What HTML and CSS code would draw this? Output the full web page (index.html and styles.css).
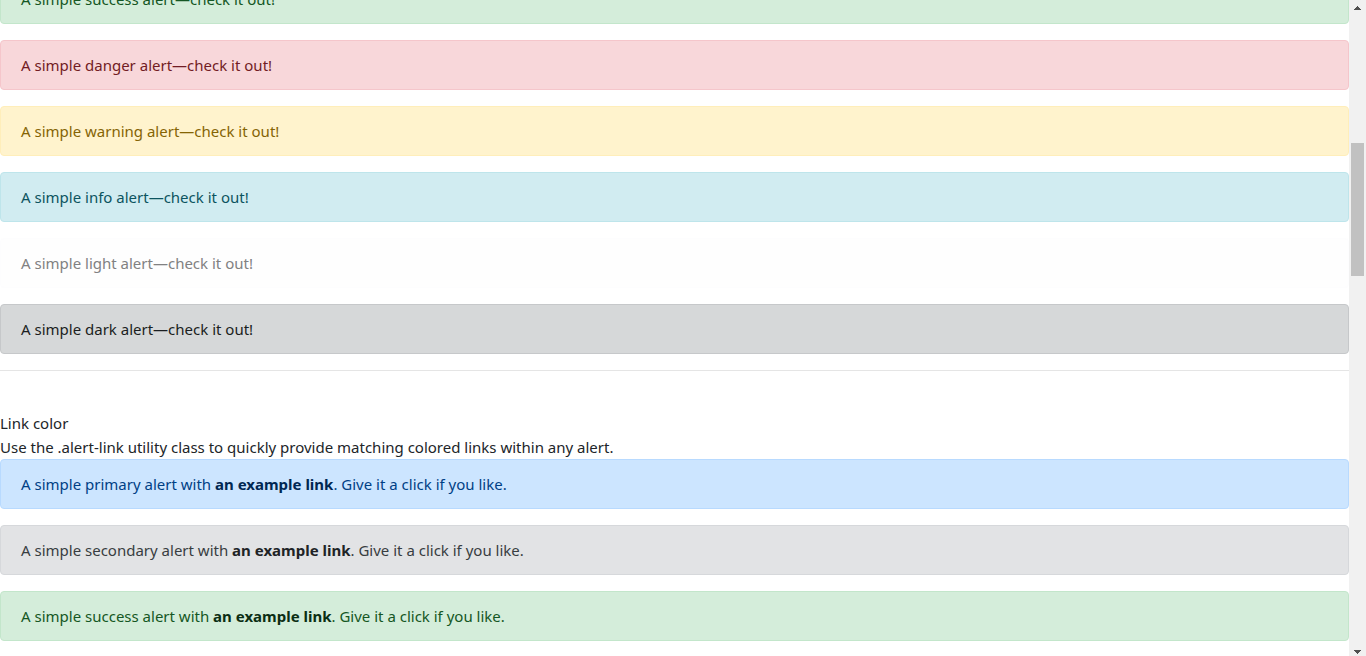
FILE: index.html
```html
<!DOCTYPE html>
<html lang="en">
<head>
<meta charset="utf-8">
<meta name="viewport" content="width=device-width, initial-scale=1">
<title>Alerts</title>
<link rel="stylesheet" href="styles.css">
</head>
<body>
<div class="window">
  <main class="page">
    <div class="page-content">
      <div class="alert alert-success" role="alert">A simple success alert—check it out!</div>
      <div class="alert alert-danger" role="alert">A simple danger alert—check it out!</div>
      <div class="alert alert-warning" role="alert">A simple warning alert—check it out!</div>
      <div class="alert alert-info" role="alert">A simple info alert—check it out!</div>
      <div class="alert alert-light" role="alert">A simple light alert—check it out!</div>
      <div class="alert alert-dark" role="alert">A simple dark alert—check it out!</div>
      <hr class="divider">
      <section class="intro">
        <div>Link color</div>
        <div>Use the .alert-link utility class to quickly provide matching colored links within any alert.</div>
      </section>
      <div class="alert alert-primary" role="alert">A simple primary alert with <a href="#" class="alert-link">an example link</a>. Give it a click if you like.</div>
      <div class="alert alert-secondary" role="alert">A simple secondary alert with <a href="#" class="alert-link">an example link</a>. Give it a click if you like.</div>
      <div class="alert alert-success" role="alert">A simple success alert with <a href="#" class="alert-link">an example link</a>. Give it a click if you like.</div>
    </div>
  </main>
  <div class="scrollbar" aria-hidden="true">
    <svg class="scroll-arrow" viewBox="0 0 17 17" shape-rendering="crispEdges"><path d="M8 6h1v1h1v1h1v1h1v1H5V9h1V8h1V7h1z"/></svg>
    <div class="scroll-track">
      <div class="scroll-before"></div>
      <div class="scroll-thumb"></div>
      <div class="scroll-after"></div>
    </div>
    <svg class="scroll-arrow" viewBox="0 0 17 17" shape-rendering="crispEdges"><path d="M5 11h7v1h-1v1h-1v1H9v1H8v-1H7v-1H6v-1H5z"/></svg>
  </div>
</div>
</body>
</html>
```

FILE: styles.css
```css
* {
  box-sizing: border-box;
}

body {
  margin: 0;
  background: #fff;
  color: #212529;
  font-family: "Segoe UI", "Noto Sans", "Open Sans", sans-serif;
  font-size: 15px;
  line-height: 24px;
}

.window {
  display: grid;
  grid-template-columns: 1fr 17px;
  height: 100vh;
  overflow: hidden;
}

.page {
  min-width: 0;
  overflow: hidden;
}

/* Scrolled part of the page: the first alert is cut by the top edge. */
.page-content {
  margin-top: -26px;
}

.alert {
  margin-bottom: 16px;
  padding: 12px 20px;
  border: 1px solid transparent;
  border-radius: 4px;
}

.alert-link {
  font-weight: 700;
  text-decoration: none;
}

.alert-primary {
  color: #004085;
  background: #cce5ff;
  border-color: #b8daff;
}

.alert-primary .alert-link {
  color: #002752;
}

.alert-secondary {
  color: #383d41;
  background: #e2e3e5;
  border-color: #d6d8db;
}

.alert-secondary .alert-link {
  color: #202326;
}

.alert-success {
  color: #155724;
  background: #d4edda;
  border-color: #c3e6cb;
}

.alert-success .alert-link {
  color: #0b2e13;
}

.alert-danger {
  color: #721c24;
  background: #f8d7da;
  border-color: #f5c6cb;
}

.alert-warning {
  color: #856404;
  background: #fff3cd;
  border-color: #ffeeba;
}

.alert-info {
  color: #0c5460;
  background: #d1ecf1;
  border-color: #bee5eb;
}

.alert-light {
  color: #818182;
  background: #fefefe;
  border-color: #fdfdfe;
}

.alert-dark {
  color: #1b1e21;
  background: #d6d8d9;
  border-color: #c6c8ca;
}

.divider {
  margin: 16px 0 40px;
  border: 0;
  border-top: 1px solid rgba(0, 0, 0, 0.1);
}

.scrollbar {
  display: flex;
  flex-direction: column;
  background: #f1f1f1;
}

.scroll-arrow {
  flex: none;
  width: 17px;
  height: 17px;
  fill: #505050;
}

.scroll-track {
  display: flex;
  flex: 1;
  flex-direction: column;
  padding: 0 2px;
}

.scroll-before {
  flex: 126;
}

.scroll-thumb {
  flex: 133;
  background: #c1c1c1;
}

.scroll-after {
  flex: 363;
}
```
